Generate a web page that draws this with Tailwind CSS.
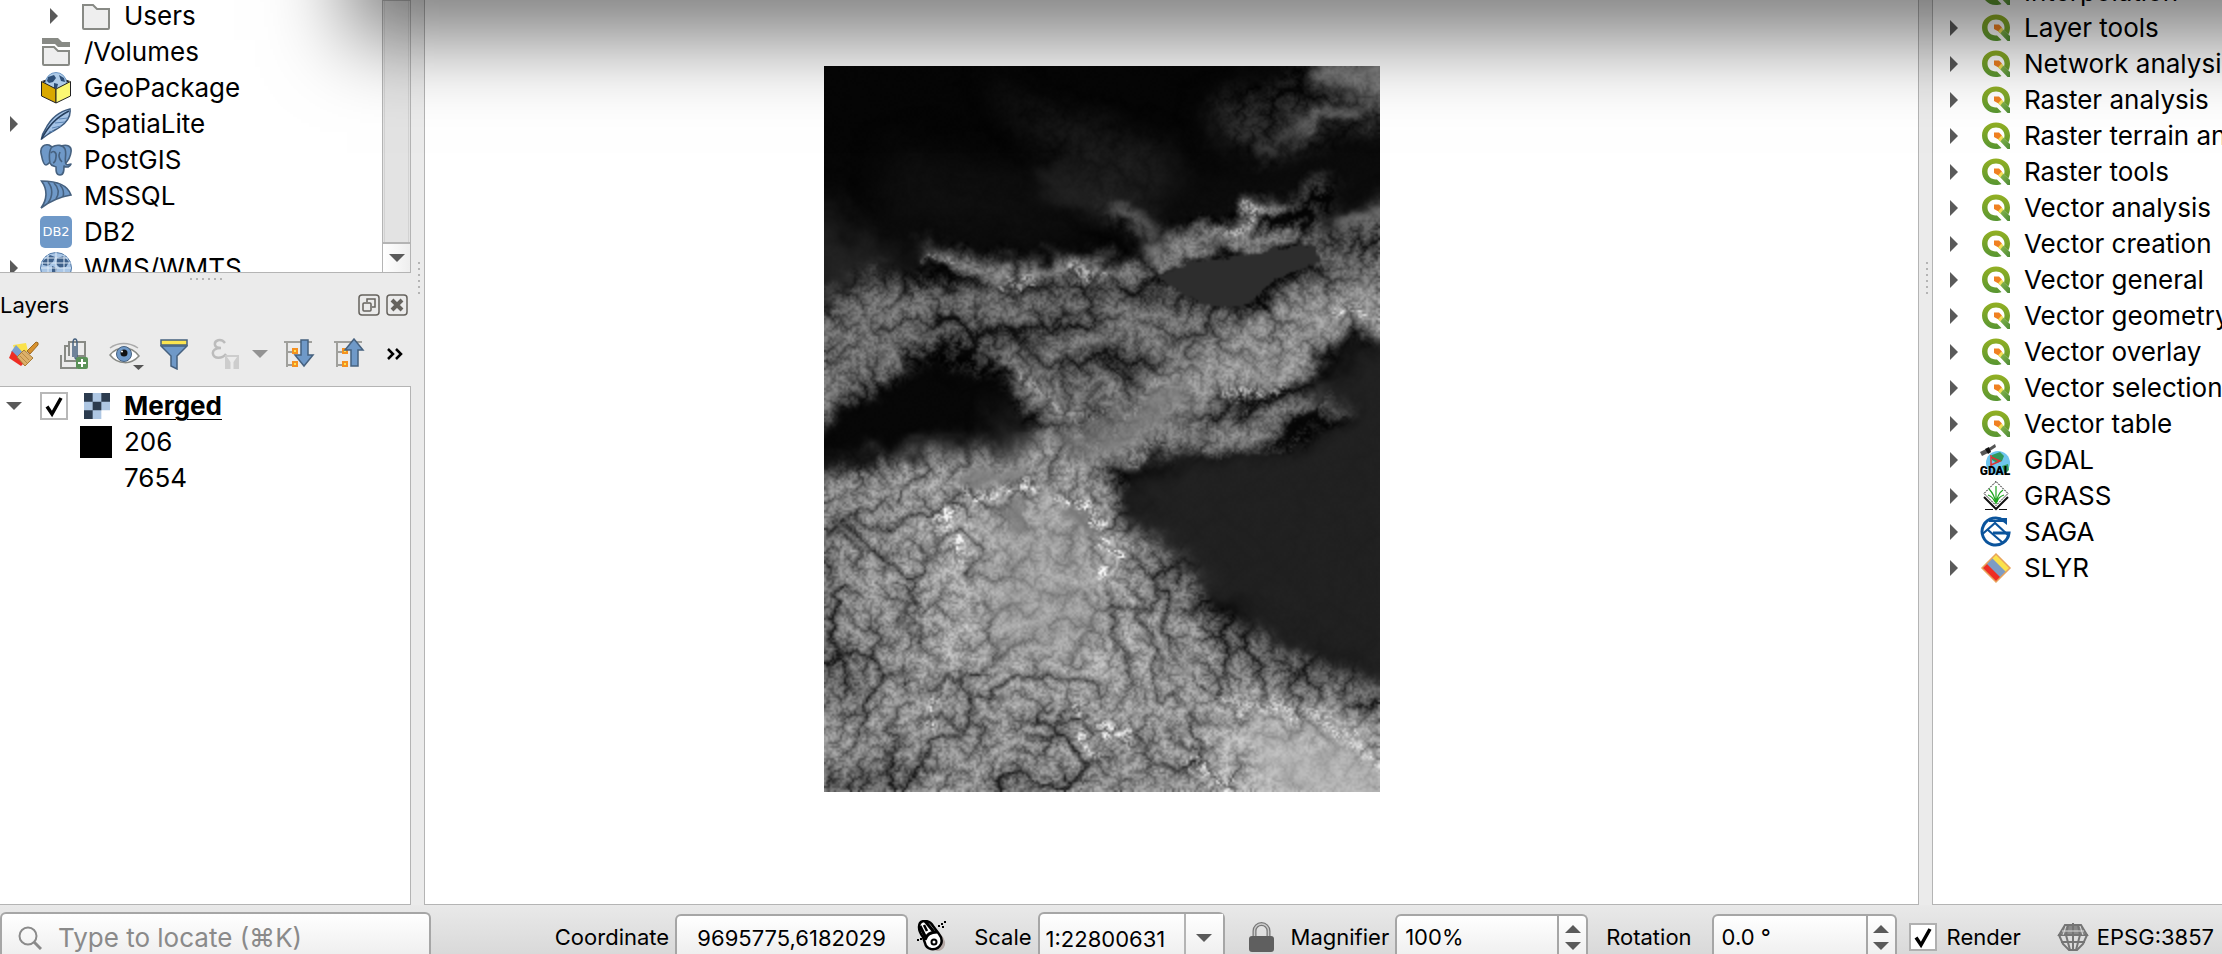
<!DOCTYPE html>
<html lang="en">
<head>
<meta charset="utf-8">
<meta name="viewport" content="width=device-width, initial-scale=1">
<title>QGIS</title>
<script src="https://cdn.jsdelivr.net/npm/@tailwindcss/browser@4"></script>
</head>
<body class="relative flex h-screen flex-col overflow-hidden bg-[#ebebeb] font-['Inter',sans-serif] text-black">

<!-- Shared icon symbols -->
<svg class="invisible absolute size-0" aria-hidden="true">
  <defs>
    <linearGradient id="gq" x1="0" y1="0" x2="0" y2="1"><stop offset="0" stop-color="#93b023"/><stop offset="1" stop-color="#589632"/></linearGradient>
    <linearGradient id="gt" x1="0" y1="0" x2="1" y2="1"><stop offset="0" stop-color="#c9cf4e"/><stop offset=".3" stop-color="#7fb04a"/><stop offset="1" stop-color="#4c8a34"/></linearGradient>
  </defs>
  <symbol id="right" viewBox="0 0 8 16"><path d="M0 0L8 8L0 16z" fill="#5a5a5a"/></symbol>
  <symbol id="down" viewBox="0 0 16 8"><path d="M0 0H16L8 8z" fill="#5a5a5a"/></symbol>
  <symbol id="up" viewBox="0 0 16 8"><path d="M0 8H16L8 0z" fill="#5a5a5a"/></symbol>
  <symbol id="q" viewBox="0 0 32 32">
    <path d="M16 2.500C8 2.500 2 8 2 15.500S8 29 16 29c2 0 4-.4 5.500-1l-4.500-4.600c-5.500.6-9.500-3-9.500-7.900 0-4.700 3.600-8 8.500-8s8.500 3.300 8.500 8c0 1-.2 2-.5 3l4.300 4C29.400 20.500 30 18 30 15.500 30 8 24 2.500 16 2.500z" fill="url(#gq)"/>
    <path d="M18 19L21 15.500L30 24V29H27.500z" fill="url(#gt)"/>
    <path d="M14 12.500h5l3 3L18.500 19.500L14 17z" fill="#f08021"/><path d="M18 19.500l3.500-4 2 2-3.200 4z" fill="#f4e05a"/>
  </symbol>
  <symbol id="folder" viewBox="0 0 32 32"><path d="M3 5h10l4 4h12v19q0 1-1 1H4q-1 0-1-1z" fill="#eee" stroke="#888a85" stroke-width="2"/></symbol>
  <symbol id="volumes" viewBox="0 0 32 32"><path d="M2 2h16l4 4h8v5H18l-3-3H2z" fill="#888a85"/><path d="M3 11h11l4 4h11v13q0 1-1 1H4q-1 0-1-1z" fill="#eee" stroke="#888a85" stroke-width="2"/></symbol>
  <symbol id="gpkg" viewBox="0 0 32 32">
    <path d="M2 9L16 4l14 5-14 8z" fill="#222"/>
    <circle cx="16" cy="11" r="10.500" fill="#aecbe8" stroke="#6d97c4"/>
    <path d="M8 5l6-2 2 3-3 4-4 1-2-2zM19 3l5 3 1 4-4-1zM14 11l4 1-1 4h-3z" fill="#2d4e77"/>
    <path d="M1.500 9.500L16 17v14L1.500 24z" fill="#d9a800" stroke="#222"/><path d="M30.500 9.500L16 17v14l14.500-7z" fill="#fcf872" stroke="#222"/>
  </symbol>
  <symbol id="feather" viewBox="0 0 32 32"><path d="M1.500 31c.5-4 2-7 4-10C10 12 17 4 30 1c1 7-3 13-10 18-4 3-8 4-13 8z" fill="#a4c3e6" stroke="#3e5b7e" stroke-width="1.500"/><path d="M1.500 31C8 19 15 10 29 3" fill="none" stroke="#253e5d" stroke-width="1.500"/><path d="M12 20l9-2M15 15l10-1M19 11l9-1M9 24l5-1" stroke="#5d86b5"/></symbol>
  <symbol id="elephant" viewBox="0 0 32 32"><g fill="#6f99c8" stroke="#46617f" stroke-width="1.600" stroke-linejoin="round"><path d="M9 1C4 0 0 3 1 9c1 5 2 12 5 12 2 0 3-2 5-4l4-12z"/><path d="M21 2c6-2 11 0 10 6-.5 5-4 10-6 12l-4-4z"/><path d="M12 3c5-3 11-2 13 2 2 5-1 11 1 15 1 2 3 0 5 0-1 3-4 4-7 2 0 4 0 9-4 9s-4-4-4-8c-2-1-5-1-6-4-1-5-1-13 2-16z"/><path d="M11 9c2-3 6-1 5 4-.6 3 0 5-3 6M20 8c-2 4-1 7 2 10" fill="none"/></g></symbol>
  <symbol id="sail" viewBox="0 0 32 32"><path d="M1.500 1C14 1 27 3 31 15 19 17 9 22 1 28 7 20 8 10 1.500 1z" fill="#6f99c8" stroke="#46617f" stroke-width="1.600"/><path d="M8 2c5 6 5 14 0 21M14 3c5 5 5 11 2 16M20 5c4 4 4 8 3 12" fill="none" stroke="#46617f" stroke-width="1.600"/></symbol>
  <symbol id="db2" viewBox="0 0 32 32"><rect width="32" height="32" rx="5" fill="#6f99c8"/><text x="16" y="19.500" text-anchor="middle" font-family="DejaVu Sans" font-size="13" fill="#fff">DB2</text></symbol>
  <symbol id="globe" viewBox="0 0 32 32"><circle cx="16" cy="16" r="15.500" fill="#a9c6e6" stroke="#527aa8"/><path d="M3 9l7-6 5 2-2 5-5 4-5-1zM17 6l7-2 5 6-3 5-6 1-4-4zM12 14l5 2-1 6h-4z" fill="#3e608a"/><path d="M1 11h30M4 6h24M1 16h30M16 0v32M8 3v26M24 3v26" stroke="#dce9f6" fill="none"/></symbol>
  <symbol id="gdal" viewBox="0 0 32 32"><circle cx="18" cy="19" r="12" fill="#6ec5ee"/><path d="M12 11l8-3 4 4-2 5-5 2-5-3zM22 22l6-2 1 6-4 4z" fill="#2f9a5c"/><path d="M11 11v13M11 13l9 4-9 4" stroke="#d33" fill="none" stroke-width="1.500"/><path d="M0 8l6-3 2 4-6 3zM9 4l6-4 1 3-6 4z" fill="#555"/><path d="M5 5l4-2 2 5-3 2z" fill="#111"/><text x="15" y="31" text-anchor="middle" font-family="Roboto" font-weight="900" font-size="12" fill="#000">GDAL</text></symbol>
  <symbol id="grass" viewBox="0 0 32 32"><path d="M16 1.500L28 13.500 16 25.500 4 13.500z" fill="#fff" stroke="#111" stroke-dasharray="2 1"/><path d="M4 17l12 12 12-12" fill="none" stroke="#111" stroke-width="2"/><path d="M5 29.500h8M19 29.500h8" stroke="#111"/><path d="M16 24C15 17 12 12 9 9M16 24c0-8 0-14 0-18M16 24c1-7 4-12 7-14M15 22c-2-4-4-6-7-7M17 22c1-4 4-6 7-7" stroke="#1ea51e" stroke-width="1.200" fill="none"/></symbol>
  <symbol id="saga" viewBox="0 0 32 32"><path d="M24 5A13.500 13.500 0 1 0 29 17H13" fill="none" stroke="#0b549c" stroke-width="3"/><path d="M2.500 18L15 7l13 12M8 14l15 13M9 5h16" fill="none" stroke="#0b549c" stroke-width="2.200"/><path d="M18 2h9v7z" fill="#0b549c"/></symbol>
  <symbol id="slyr" viewBox="0 0 32 32"><path d="M16 2L30 16 16 30 2 16z" fill="#7d9cc4"/><path d="M16 2L30 16l-4 4L12 6z" fill="#fbe24b"/><path d="M2 16l4.500-4.500 14 14L16 30z" fill="#ee2d24"/><path d="M16 2L30 16 16 30 2 16z" fill="none" stroke="#e8a35c" stroke-width="1.500"/></symbol>
  <symbol id="check" viewBox="0 0 28 28"><path d="M7 14.500l5 7.500L21 6" fill="none" stroke="#000" stroke-width="3.500"/></symbol>
</svg>

<div class="flex min-h-0 flex-1">

  <!-- Left docks: browser and layers -->
  <aside class="flex w-[411px] shrink-0 flex-col">
    <section aria-label="Browser" class="flex h-[273px] border-r border-b border-[#b4b4b4] bg-white">
      <ul class="-mt-[2px] min-w-0 flex-1 overflow-hidden text-[26px] leading-9">
        <li class="flex h-9 items-center pl-[50px]"><button aria-label="Expand Users" class="w-[30px]"><svg class="h-4 w-2"><use href="#right"/></svg></button><svg class="mr-3 size-8"><use href="#folder"/></svg>Users</li>
        <li class="flex h-9 items-center pl-10"><svg class="mr-3 size-8"><use href="#volumes"/></svg>/Volumes</li>
        <li class="flex h-9 items-center pl-10"><svg class="mr-3 size-8"><use href="#gpkg"/></svg>GeoPackage</li>
        <li class="flex h-9 items-center pl-[10px]"><button aria-label="Expand SpatiaLite" class="w-[30px]"><svg class="h-4 w-2"><use href="#right"/></svg></button><svg class="mr-3 size-8"><use href="#feather"/></svg>SpatiaLite</li>
        <li class="flex h-9 items-center pl-10"><svg class="mr-3 size-8"><use href="#elephant"/></svg>PostGIS</li>
        <li class="flex h-9 items-center pl-10"><svg class="mr-3 size-8"><use href="#sail"/></svg>MSSQL</li>
        <li class="flex h-9 items-center pl-10"><svg class="mr-3 size-8"><use href="#db2"/></svg>DB2</li>
        <li class="flex h-9 items-center pl-[10px]"><button aria-label="Expand WMS/WMTS" class="w-[30px]"><svg class="h-4 w-2"><use href="#right"/></svg></button><svg class="mr-3 size-8"><use href="#globe"/></svg>WMS/WMTS</li>
      </ul>
      <div class="flex w-7 flex-col border-l border-[#b4b4b4]">
        <div class="flex-1 border-t border-b-2 border-[#b4b4b4] bg-[#e3e3e3]"><div class="mx-px h-full border-x border-[#d2d2d2]"></div></div>
        <button aria-label="Scroll down" class="flex h-7 items-center justify-center bg-linear-to-r from-white to-[#eee]"><svg class="h-2 w-4"><use href="#down"/></svg></button>
      </div>
    </section>
    <div class="flex h-3 items-center justify-center gap-1">
      <i class="size-[2px] bg-[#b4b4b4]"></i><i class="size-[2px] bg-[#b4b4b4]"></i><i class="size-[2px] bg-[#b4b4b4]"></i><i class="size-[2px] bg-[#b4b4b4]"></i><i class="size-[2px] bg-[#b4b4b4]"></i><i class="size-[2px] bg-[#b4b4b4]"></i>
    </div>
    <header class="flex h-10 items-center gap-[6px] pr-[3px]">
      <h2 class="flex-1 text-[22px]">Layers</h2>
      <button aria-label="Float"><svg class="size-[22px]" viewBox="0 0 22 22" fill="none" stroke="#66635e" stroke-width="1.500"><rect x="1" y="1" width="20" height="20" rx="3"/><rect x="5" y="9" width="8" height="8" rx="1"/><path d="M9 8V5h8v8h-3"/></svg></button>
      <button aria-label="Close"><svg class="size-[22px]" viewBox="0 0 22 22" fill="none" stroke="#66635e"><rect x="1" y="1" width="20" height="20" rx="3" stroke-width="1.500"/><path d="M6 6l10 10M16 6L6 16" stroke-width="4"/></svg></button>
    </header>
    <div role="toolbar" aria-label="Layers toolbar" class="flex h-[61px] items-center pb-[3px] pl-2 [&_button]:flex [&_button]:shrink-0">
      <button aria-label="Layer styling" class="w-[51px]"><svg class="size-8" viewBox="0 0 32 32"><path d="M5 7l13-2 2 8-12 5z" fill="#fbe24b"/><path d="M3 14l5-7 10 11-4 6z" fill="#7aa0d0"/><path d="M1 20l3-7 12 12-3 3z" fill="#ee2d24"/><path d="M9 19l7-7 9 8-8 8z" fill="#dcb06a" stroke="#a87b35"/><path d="M12 18l7 7M14 15l7 7" stroke="#a87b35" stroke-width=".7"/><path d="M19 13l9-9q3 0 2 3l-8 9z" fill="#d8922f" stroke="#9c6a25"/></svg></button>
      <button aria-label="Add group" class="w-[50px]"><svg class="size-8" viewBox="0 0 32 32" fill="none"><path d="M2 17v13h16" stroke="#888a85" stroke-width="2"/><path d="M9 8H6v15h15v-5" stroke="#888a85" stroke-width="2"/><path d="M10 18V4h16v14H18" stroke="#888a85" stroke-width="2"/><path d="M14 19V5q0-4 2-4t2 4v13q0 3-1 3t-1-3V8" stroke="#46617f" stroke-width="1.500"/><rect x="17" y="19" width="12" height="12" rx="2" fill="#5a9158"/><path d="M23 21v8M19 25h8" stroke="#fff" stroke-width="2"/></svg></button>
      <button aria-label="Manage map themes" class="w-[51px]"><svg class="h-8 w-9" viewBox="0 0 36 32" fill="none"><path d="M1 17C8 8 22 7 30 18 22 27 9 27 1 17z" fill="#fff" stroke="#888a85" stroke-width="1.500"/><path d="M1 10C9 4 20 4 29 10" stroke="#aaa" stroke-width="1.500"/><circle cx="15" cy="16" r="7.500" fill="#6f99c8" stroke="#46617f"/><circle cx="15" cy="15" r="3.500" fill="#111"/><circle cx="13" cy="13.500" r="1" fill="#fff"/><path d="M24 27h11l-5.500 5z" fill="#555"/></svg></button>
      <button aria-label="Filter legend" class="w-[51px]"><svg class="h-8 w-7" viewBox="0 0 28 32"><path d="M1 8h26L17 18v13l-6-3V18z" fill="#6f99c8" stroke="#46617f" stroke-width="1.500"/><path d="M1 2h26v5H1z" fill="#fbe44f" stroke="#46617f" stroke-width="1.500"/></svg></button>
      <button aria-label="Filter by expression" class="w-[72px] items-center justify-between pr-[15px]"><svg class="h-8 w-7" viewBox="0 0 28 32"><path d="M14 5C10 0 3 2 4 7c.5 3 4 3 6 3-5 0-9 2-8 6 1 5 9 5 13 0" fill="none" stroke="#bcbcbc" stroke-width="2.500"/><path d="M14 17h14v14H14z" fill="#cdcdcd"/><path d="M16 19h10l-3.500 5v7h-3v-7z" fill="#ebebeb"/></svg><svg class="h-2 w-4 opacity-60"><use href="#down"/></svg></button>
      <button aria-label="Expand all" class="w-[50px]"><svg class="size-8" viewBox="0 0 32 32"><path d="M1 4h28M4 4v25M4 14h6M4 27h6" stroke="#a0a09c" stroke-width="2" fill="none"/><path d="M10 11h4v4h-4zM10 24h4v4h-4z" fill="#fbe44f" stroke="#f59120" stroke-width="2"/><path d="M18 2h7v15h5l-9 11-9-11h6z" fill="#6f99c8" stroke="#46617f" stroke-width="1.500"/></svg></button>
      <button aria-label="Collapse all" class="w-[50px]"><svg class="size-8" viewBox="0 0 32 32"><path d="M1 4h28M4 4v25M4 14h6M4 27h6" stroke="#a0a09c" stroke-width="2" fill="none"/><path d="M10 11h4v4h-4zM10 24h4v4h-4z" fill="#fbe44f" stroke="#f59120" stroke-width="2"/><path d="M18 28h7V12h5L21 1 12 12h6z" fill="#6f99c8" stroke="#46617f" stroke-width="1.500"/></svg></button>
      <button aria-label="More tools" class="pl-1"><svg class="h-3 w-4" viewBox="0 0 16 12" fill="none" stroke="#000" stroke-width="2.500"><path d="M1 1l5 5-5 5M9 1l5 5-5 5"/></svg></button>
    </div>
    <ul class="flex-1 border-t border-r border-b border-[#b4b4b4] bg-white pt-px text-[26px] leading-9">
      <li class="flex h-9 items-center pl-[6px]"><button aria-label="Collapse Merged" class="w-[34px]"><svg class="h-2 w-4"><use href="#down"/></svg></button>
        <label class="flex items-center"><span class="relative mr-4 size-7"><input type="checkbox" checked class="block size-7 appearance-none border-2 border-[#b8b8b8] bg-white"><svg class="pointer-events-none absolute inset-0 size-7"><use href="#check"/></svg></span>
        <svg class="mr-[14px] size-[26px]" viewBox="0 0 3 3"><path d="M0 0h3v2H2v1H0z" fill="#aec7e3"/><path d="M0 0h1v1H0zM2 0h1v1H2zM1 1h1v1H1zM0 2h1v1H0z" fill="#2c3c4f"/></svg><span class="font-bold underline decoration-1 underline-offset-4">Merged</span></label></li>
      <li class="flex h-9 items-center pl-20"><span class="mr-3 size-8 bg-black"></span>206</li>
      <li class="flex h-9 items-center pl-20"><span class="mr-3 size-8 bg-white"></span>7654</li>
    </ul>
  </aside>

  <div class="flex w-[13px] shrink-0 flex-col items-end gap-1 pt-[262px] pr-1">
    <i class="size-[2px] bg-[#b4b4b4]"></i><i class="size-[2px] bg-[#b4b4b4]"></i><i class="size-[2px] bg-[#b4b4b4]"></i><i class="size-[2px] bg-[#b4b4b4]"></i><i class="size-[2px] bg-[#b4b4b4]"></i><i class="size-[2px] bg-[#b4b4b4]"></i>
  </div>

  <!-- Map canvas with the elevation raster -->
  <main class="min-w-0 flex-1 border-x border-b border-[#b4b4b4] bg-white pt-[66px] pl-[399px]">
    <canvas id="dem" width="278" height="363" class="h-[726px] w-[556px] bg-[#333]" role="img" aria-label="Merged elevation raster"></canvas>
  </main>

  <div class="flex w-[13px] shrink-0 flex-col items-end gap-1 pt-[262px] pr-1">
    <i class="size-[2px] bg-[#b4b4b4]"></i><i class="size-[2px] bg-[#b4b4b4]"></i><i class="size-[2px] bg-[#b4b4b4]"></i><i class="size-[2px] bg-[#b4b4b4]"></i><i class="size-[2px] bg-[#b4b4b4]"></i><i class="size-[2px] bg-[#b4b4b4]"></i>
  </div>

  <!-- Processing toolbox -->
  <aside class="w-[290px] shrink-0 overflow-hidden border-b border-l border-[#b4b4b4] bg-white">
    <ul class="-mt-[26px] text-[26px] leading-9 whitespace-nowrap [&>li]:flex [&>li]:h-9 [&>li]:items-center [&>li]:pl-[17px] [&_button]:w-[30px] [&_button]:shrink-0 [&_button>svg]:h-4 [&_button>svg]:w-2 [&>li>svg]:mr-3 [&>li>svg]:size-8 [&>li>svg]:shrink-0">
      <li><button aria-label="Expand"><svg><use href="#right"/></svg></button><svg><use href="#q"/></svg>Interpolation</li>
      <li><button aria-label="Expand"><svg><use href="#right"/></svg></button><svg><use href="#q"/></svg>Layer tools</li>
      <li><button aria-label="Expand"><svg><use href="#right"/></svg></button><svg><use href="#q"/></svg>Network analysis</li>
      <li><button aria-label="Expand"><svg><use href="#right"/></svg></button><svg><use href="#q"/></svg>Raster analysis</li>
      <li><button aria-label="Expand"><svg><use href="#right"/></svg></button><svg><use href="#q"/></svg>Raster terrain analysis</li>
      <li><button aria-label="Expand"><svg><use href="#right"/></svg></button><svg><use href="#q"/></svg>Raster tools</li>
      <li><button aria-label="Expand"><svg><use href="#right"/></svg></button><svg><use href="#q"/></svg>Vector analysis</li>
      <li><button aria-label="Expand"><svg><use href="#right"/></svg></button><svg><use href="#q"/></svg>Vector creation</li>
      <li><button aria-label="Expand"><svg><use href="#right"/></svg></button><svg><use href="#q"/></svg>Vector general</li>
      <li><button aria-label="Expand"><svg><use href="#right"/></svg></button><svg><use href="#q"/></svg>Vector geometry</li>
      <li><button aria-label="Expand"><svg><use href="#right"/></svg></button><svg><use href="#q"/></svg>Vector overlay</li>
      <li><button aria-label="Expand"><svg><use href="#right"/></svg></button><svg><use href="#q"/></svg>Vector selection</li>
      <li><button aria-label="Expand"><svg><use href="#right"/></svg></button><svg><use href="#q"/></svg>Vector table</li>
      <li><button aria-label="Expand"><svg><use href="#right"/></svg></button><svg><use href="#gdal"/></svg>GDAL</li>
      <li><button aria-label="Expand"><svg><use href="#right"/></svg></button><svg><use href="#grass"/></svg>GRASS</li>
      <li><button aria-label="Expand"><svg><use href="#right"/></svg></button><svg><use href="#saga"/></svg>SAGA</li>
      <li><button aria-label="Expand"><svg><use href="#right"/></svg></button><svg><use href="#slyr"/></svg>SLYR</li>
    </ul>
  </aside>
</div>

<!-- Status bar -->
<footer class="flex h-[49px] shrink-0 items-start overflow-hidden bg-linear-to-b from-[#e9e9e9] to-[#d9d9d9] pt-[7px] text-[22px] leading-[50px] whitespace-nowrap">
  <label class="flex h-[50px] w-[431px] shrink-0 items-center rounded-t-md border-x-2 border-t-2 border-[#a6a6a6] bg-linear-to-b from-white to-[#ececec] pl-4">
    <svg class="mr-4 size-6 shrink-0" viewBox="0 0 24 24" fill="none" stroke="#8a8a8a"><circle cx="10" cy="10" r="8.500" stroke-width="2"/><path d="M16 16l7 7" stroke-width="3"/></svg>
    <input type="text" aria-label="Locator" placeholder="Type to locate (⌘K)" class="w-full bg-transparent text-[26px] outline-none placeholder:text-[#8a8a8a]">
  </label>
  <div class="min-w-0 flex-1"></div>
  <label for="coord" class="mr-1.5">Coordinate</label>
  <input id="coord" type="text" value="9695775,6182029" class="mt-[2px] h-[46px] w-[233px] shrink-0 rounded-t-md border-x-2 border-t-2 border-[#a6a6a6] bg-linear-to-b from-white to-[#ececec] text-center outline-none">
  <button aria-label="Toggle extents" class="mt-2 ml-2 w-[58px] shrink-0"><svg class="h-8 w-8" viewBox="0 0 32 32"><path d="M14 4l8 8q8 6 7 13-2 6-8 6l-6-3z" fill="#b5a9a6"/><path d="M3 7Q3 1 9 1q5 0 8 5l6 8q4 5 2 10-3 6-10 5-5-1-6-6l-2-6Q3 12 3 7z" fill="#fff" stroke="#000" stroke-width="2.500"/><path d="M4 6l6 12M9 1l9 11M9 20q2-8 12-8" fill="none" stroke="#000" stroke-width="3"/><path d="M8 5l3 6" stroke="#000" stroke-width="2.500"/><circle cx="18" cy="22" r="2.500" fill="none" stroke="#000" stroke-width="2"/><path d="M22 6h2M25 4h2M28 2h2M1 20h2M4 19h2M26 7h2" stroke="#000" stroke-width="2"/></svg></button>
  <label for="scale" class="mr-1.5">Scale</label>
  <div class="relative w-[187px] shrink-0">
    <select id="scale" class="h-[50px] w-full appearance-none rounded-t-md border-x-2 border-t-2 border-[#a6a6a6] bg-linear-to-b from-white to-[#ececec] pl-[6px] outline-none"><option>1:22800631</option></select>
    <span class="pointer-events-none absolute top-[2px] right-[2px] flex h-12 w-[39px] items-center justify-center border-l-2 border-[#b4b4b4] bg-linear-to-b from-white to-[#ececec]"><svg class="h-2 w-4"><use href="#down"/></svg></span>
  </div>
  <button aria-label="Lock scale" class="mt-[10px] ml-6 w-[42px] shrink-0"><svg class="h-[30px] w-[25px]" viewBox="0 0 25 30"><path d="M5.500 15V9a7 7 0 0 1 14 0v6" fill="none" stroke="#777" stroke-width="4"/><path d="M5.500 15V9a7 7 0 0 1 14 0v6" fill="none" stroke="#ccc" stroke-width="1.500"/><rect y="14" width="25" height="16" rx="3" fill="#5f5f5f"/></svg></button>
  <label for="mag" class="mr-1.5">Magnifier</label>
  <div class="mt-[2px] flex h-[50px] w-[193px] shrink-0 rounded-t-md border-x-2 border-t-2 border-[#a6a6a6] bg-linear-to-b from-white to-[#ececec]">
    <input id="mag" type="text" value="100%" class="h-[42px] min-w-0 flex-1 bg-transparent pl-2 outline-none">
    <span class="flex w-[29px] flex-col items-center gap-[9px] border-l-2 border-[#a6a6a6] pt-[9px]"><button aria-label="Increase magnifier" class="flex"><svg class="h-2 w-4"><use href="#up"/></svg></button><button aria-label="Decrease magnifier" class="flex"><svg class="h-2 w-4"><use href="#down"/></svg></button></span>
  </div>
  <label for="rot" class="mr-5 ml-[18px]">Rotation</label>
  <div class="mt-[2px] flex h-[50px] w-[185px] shrink-0 rounded-t-md border-x-2 border-t-2 border-[#a6a6a6] bg-linear-to-b from-white to-[#ececec]">
    <input id="rot" type="text" value="0.0 °" class="h-[42px] min-w-0 flex-1 bg-transparent pl-2 outline-none">
    <span class="flex w-[29px] flex-col items-center gap-[9px] border-l-2 border-[#a6a6a6] pt-[9px]"><button aria-label="Increase rotation" class="flex"><svg class="h-2 w-4"><use href="#up"/></svg></button><button aria-label="Decrease rotation" class="flex"><svg class="h-2 w-4"><use href="#down"/></svg></button></span>
  </div>
  <label class="ml-3 flex h-[50px] items-center"><span class="relative mr-[10px] size-7"><input type="checkbox" checked class="block size-7 appearance-none border-2 border-[#b0b0b0] bg-white"><svg class="pointer-events-none absolute inset-0 size-7"><use href="#check"/></svg></span>Render</label>
  <button class="mr-2 ml-9 flex h-[50px] shrink-0 items-center gap-2"><svg class="size-8" viewBox="0 0 32 32" fill="none" stroke="#757575" stroke-width="2"><path d="M8 4h16l6 10H2z" fill="#8a8a8a"/><path d="M2 14l4 9 6 6h8l6-6 4-9"/><path d="M11 4l-2 10 4 15M21 4l2 10-4 15M1 14h30M4 21h24M16 2v27"/><path d="M9 5l-3 9M23 5l3 9M5 10h22" stroke="#d9d9d9" stroke-width="1"/></svg>EPSG:3857</button>
</footer>

<!-- Shadow cast by the window above -->
<div class="pointer-events-none absolute -top-[400px] -right-[200px] left-[347px] h-[400px] shadow-[0_40px_76px_rgba(0,0,0,0.5)]"></div>

<script>
// Elevation raster: painted regions give the mean height, then drainage is
// routed over a noisy surface so that valleys branch as rivers do.
(() => {
  const W = 278, H = 363, N = W * H, S = W / 1543;
  const layer = (bg, items) => {
    const c = document.createElement('canvas'); c.width = W; c.height = H;
    const g = c.getContext('2d', { willReadFrequently: true });
    g.fillStyle = bg; g.fillRect(0, 0, W, H);
    g.setTransform(S, 0, 0, S, -11 * S, -18 * S);
    g.lineJoin = g.lineCap = 'round';
    for (const [v, blur, d, stroke] of items) {
      g.filter = blur ? `blur(${blur * S}px)` : 'none';
      const col = `rgb(${v},${v},${v})`, p = new Path2D(d);
      if (stroke) { g.strokeStyle = col; g.lineWidth = stroke; g.stroke(p); }
      else { g.fillStyle = col; g.fill(p); }
    }
    const px = g.getImageData(0, 0, W, H).data, out = new Float32Array(N);
    for (let i = 0; i < N; i++) out[i] = px[i * 4];
    return out;
  };

  let seed = 12345;
  const rnd = () => (seed = (seed * 1664525 + 1013904223) >>> 0) / 4294967296;
  const field = cell => {
    const gw = Math.ceil(W / cell) + 2, gh = Math.ceil(H / cell) + 2, v = Float32Array.from({ length: gw * gh }, rnd);
    const out = new Float32Array(N);
    for (let y = 0; y < H; y++) for (let x = 0; x < W; x++) {
      const fx = x / cell, fy = y / cell, a = fx | 0, b = fy | 0, s = t => t * t * (3 - 2 * t), u = s(fx - a), w = s(fy - b), k = b * gw + a;
      out[y * W + x] = (v[k] * (1 - u) + v[k + 1] * u) * (1 - w) + (v[k + gw] * (1 - u) + v[k + gw + 1] * u) * w - .5;
    }
    return out;
  };
  const n1 = field(18), n2 = field(8), n3 = field(4), n4 = field(2), n5 = field(1);
  const wx = field(11), wy = field(11), vx = field(4), vy = field(4);
  // Bends a layer's outlines by smooth noise.
  const warp = (src, big, small) => {
    const out = new Float32Array(N);
    for (let y = 0; y < H; y++) for (let x = 0; x < W; x++) {
      const i = y * W + x;
      const X = Math.max(0, Math.min(W - 1, Math.round(x + wx[i] * big + vx[i] * small)));
      const Y = Math.max(0, Math.min(H - 1, Math.round(y + wy[i] * big + vy[i] * small)));
      out[i] = src[Y * W + X];
    }
    return out;
  };

  const TARIM = 'M1640 790L1500 800 1390 900 1330 960 1500 960 1400 1040 1300 1075 1180 1100 1000 1105 960 1150 850 1170 870 1250 950 1320 1040 1390 1080 1480 1200 1545 1400 1640 1640 1740z';
  const LAKE = 'M930 605L1000 575 1100 555 1200 535 1320 522 1380 525 1390 560 1280 605 1200 665 1170 685 1080 685 1010 655z';
  const FERGANA = 'M-40 1080L100 970 200 900 300 830 370 870 470 900 510 960 490 1020 420 1070 250 1080 100 1090 -40 1150z';

  const base = warp(layer('#050505', [
    [14, 50, 'M200 250L640 330 740 520 150 480z'],
    [26, 40, 'M440 30L640 160 960 240 1040 340 900 480 740 380 640 240z'],
    [38, 45, 'M1080 140L1350 60 1600 20V180L1260 260 1090 220z'],
    [34, 40, 'M-40 380L160 530 300 560 280 640 -40 700z'],
    [12, 40, 'M950 350L1340 290 1600 230V330L1400 420 1000 440z'],
    [74, 35, 'M1330 470L1600 400V640L1400 640z'],
    [112, 18, 'M1370 0H1600V125L1410 95 1350 60z'],
    [110, 12, 'M1320 205L1360 150 1500 145', 22], [70, 16, 'M1320 205L1230 260', 26],
    [40, 30, 'M640 330L860 440', 60], [98, 14, 'M815 415L930 490', 26],
    [108, 16, 'M880 510L1000 480 1130 440 1200 395 1310 390 1280 430 1180 470 1370 490 1380 525 1150 535 920 600z'],
    [62, 14, 'M1310 395L1410 340', 20], [110, 16, 'M1460 455L1600 400', 34],
    [112, 18, 'M250 500L400 530 560 550 740 560 920 570 910 620 520 630 380 580z'],
    [102, 26, 'M-40 720L120 610 300 640 480 630 900 640 1180 700 1420 570 1600 550V780L1450 770 1290 920 1100 960 960 1110 560 1140 600 1000 500 850 420 790 330 760 180 900 -40 1050z'],
    [136, 26, 'M1180 730L1400 640 1600 650V750L1450 735 1300 880 1130 950 960 970 900 900z'],
    [122, 26, 'M700 1090L800 1000 1020 890 1060 1000 900 1090 780 1150z'],
    [108, 20, 'M960 1100L1060 990 1240 970 1430 890 1490 970 1340 1000 1230 1090z'],
    [58, 22, 'M580 720L760 690 820 700 700 760 580 770z'], [66, 18, 'M640 830L840 790 980 860 740 900z'], [48, 16, 'M330 710L440 760 560 760', 50],
    [64, 14, 'M600 660h90M840 660h70', 30],
    [6, 28, FERGANA], [40, 34, 'M500 920L560 1000 540 1080 470 1090z'],
    [130, 30, 'M-40 1150L200 1100 300 1080 470 1090 600 1040 800 1100 780 1180 870 1260 950 1350 1040 1440 1070 1560 1240 1660 1400 1720 1600 1800V2100H-40z'],
    [152, 45, 'M260 1250L700 1200 800 1300 860 1500 1000 1800 600 1750 300 1700z'],
    [174, 50, 'M1050 1840L1350 1800 1620 1930V2100H1160z'],
    [84, 30, 'M-30 1200L40 1240 50 1480 70 1700 20 1780 -30 1800z'],
    [76, 35, 'M30 1630L120 1650 140 1830 50 1760z'],
    [84, 35, 'M-20 1980L280 1920 260 2080H-20zM430 2000L690 1990 690 2080H430z'],
    [32, 24, TARIM], [86, 35, 'M900 1300L1060 1440 1080 1540 960 1500 890 1400z'],
    [84, 34, 'M1100 1560L1240 1590 1420 1690 1600 1740V1860L1380 1760 1120 1700z'],
    [130, 10, 'M400 1165L500 1145 560 1135', 22], [128, 10, 'M540 1235V1290', 44], [120, 10, 'M680 1250L790 1320', 18],
    [112, 6, 'M810 1480L835 1560 850 1650', 16],
    [98, 6, 'M790 745L830 720 870 750 830 775z']
  ]), 8, 4);
  const lake = warp(layer('#000', [[255, 2, LAKE]]), 3, 2);

  const relief = warp(layer('#060606', [
    [26, 40, 'M440 30L960 240 900 480 640 300z'],
    [90, 30, 'M1080 140L1350 0H1600V180L1200 270z'],
    [110, 20, 'M740 370L830 420 960 500 860 500z'],
    [200, 20, 'M-40 720L110 600 420 600 250 500 340 510 600 550 900 560 1000 470 1180 400 1310 380 1420 330 1400 500 1600 400V790L1450 790 1320 920 1500 950 1380 1050 1150 1100 950 1110 780 1150 560 1140 590 1010 480 880 330 830 180 930 -40 1060z'],
    [250, 24, 'M-40 1120L250 1090 800 1100 860 1260 950 1340 1060 1420 1100 1540 1250 1620 1400 1690 1600 1760V2100H-40z'],
    [140, 45, 'M440 1250L740 1230 800 1620 480 1680z'],
    [80, 50, 'M1150 1850L1400 1850 1620 1960V2100H1250z'],
    [60, 20, 'M640 1060L1000 890 1050 960 760 1110z'],
    [6, 22, FERGANA], [6, 18, TARIM],
    [20, 10, 'M400 1165L560 1135M540 1230V1290M680 1250L790 1320', 30]
  ]), 8, 4);

  const trunk = warp(layer('#000', [
    [150, 4, 'M30 1270L140 1240 250 1200 300 1170 M60 1330L180 1290 260 1260 350 1240 370 1260 440 1280M230 1430L330 1340 440 1350 430 1400 390 1420 480 1440 560 1420', 10],
    [120, 4, 'M980 1490L970 1600 1010 1720 1130 1800M930 1640L950 1760 1040 1850 1060 1960 1150 2030M850 1500L920 1600 970 1720', 10],
    [80, 4, 'M270 1560L430 1540 560 1500M260 1600L300 1660M430 1690L450 1660 540 1610 660 1600M600 1690L760 1610 720 1480M1060 1830L1200 1810 1360 1860 1440 1910', 10],
    [220, 4, 'M30 1600L60 1450 110 1400 170 1370 230 1420 210 1480 260 1520 240 1620 250 1740 310 1750 390 1700 540 1705', 9],
    [180, 4, 'M20 1690L70 1640 150 1680 150 1850 20 1960M220 2030L290 1910 340 1850 400 1840 470 1750 540 1730 720 1740 780 1760 750 1830 680 1850M750 1960L840 1990 890 2050M850 1970L980 1960 1040 1980', 8],
    [255, 4, 'M470 2050L520 2000 600 2005 680 2025 730 1990 730 1940 640 1880 590 1850 610 1790', 14],
    [255, 5, 'M330 700L400 740 430 770 360 830 360 920M450 670L460 740 560 750 610 770 620 820', 14],
    [60, 4, 'M0 830L100 780 260 690M20 760L120 680M620 830L900 810 1180 830 1290 880M640 880L900 840M1190 690V730M1410 660L1415 730 1460 730M910 560L915 620', 8]
  ]), 13, 7);
  const snow = warp(layer('#000', [
    [90, 8, 'M400 1205H500M520 1180H590M670 1220L740 1240 800 1310M300 1840L330 1790M780 1840L850 1870M730 1880L770 1930M1030 1950L1120 2010M700 2070L740 2040M320 1280L350 1260 335 1310M370 1360L390 1380M700 1795L740 1830', 18],
    [160, 5, 'M800 1350L830 1375M800 1430V1455', 16],
    [60, 8, 'M310 545L380 560M520 610L580 600M690 600L780 600M1120 470L1220 420M1140 940L1290 915M1440 690L1540 710', 24],
    [34, 5, 'M560 860L680 990 760 1070M800 1020L900 940 1000 890M850 1110L960 1080M670 985L800 975', 12],
    [34, 5, 'M1030 1090L1200 1095 1290 1070 1350 1040M1340 1000L1440 930', 10],
    [45, 8, 'M1130 1800L1250 1790 1400 1830 1554 1960', 20]
  ]), 9, 6);
  for (let i = 0; i < N; i++) {
    const k = lake[i] / 255;
    base[i] = base[i] * (1 - k) + 45 * k;
    relief[i] *= 1 - k;
  }

  // Priority flood from the map edges gives each cell a downstream neighbour.
  const z = new Float32Array(N);
  for (let i = 0; i < N; i++) z[i] = base[i] * .35 + n1[i] * 26 + n2[i] * 20 + n3[i] * 14 + n4[i] * 9 + n5[i] * 9 - trunk[i] * .35;
  const to = new Int32Array(N).fill(-1), seen = new Uint8Array(N), order = [];
  const BINS = 4096, bins = Array.from({ length: BINS }, () => []);
  const bin = h => Math.max(0, Math.min(BINS - 1, Math.round((h + 200) * 8)));
  for (let i = 0; i < N; i++) {
    const x = i % W, y = (i / W) | 0;
    if (x === 0 || y === 0 || x === W - 1 || y === H - 1 || base[i] < 12) { seen[i] = 1; bins[bin(z[i])].push(i); }
  }
  for (let cur = 0; cur < BINS; cur++) {
    const q = bins[cur];
    for (let k = 0; k < q.length; k++) {
      const i = q[k], x = i % W, y = (i / W) | 0;
      order.push(i);
      for (let dy = -1; dy <= 1; dy++) for (let dx = -1; dx <= 1; dx++) {
        const X = x + dx, Y = y + dy, j = Y * W + X;
        if (X < 0 || Y < 0 || X >= W || Y >= H || seen[j]) continue;
        seen[j] = 1; to[j] = i; bins[Math.max(cur, bin(z[j]))].push(j);
      }
    }
  }
  const acc = new Float32Array(N).fill(1);
  for (let k = order.length - 1; k >= 0; k--) { const i = order[k]; if (to[i] >= 0) acc[to[i]] += acc[i]; }

  // Depth of each channel, relaxed sideways to widen large valleys.
  let v = new Float32Array(N);
  for (let i = 0; i < N; i++) v[i] = Math.min(8.5, Math.log2(acc[i]));
  for (let pass = 0; pass < 3; pass++) {
    const w = v.slice();
    for (let y = 1; y < H - 1; y++) for (let x = 1; x < W - 1; x++) {
      const i = y * W + x;
      w[i] = Math.max(v[i], (v[i - 1] + v[i + 1] + v[i - W] + v[i + W]) / 4, Math.max(v[i - 1], v[i + 1], v[i - W], v[i + W]) - 2.6);
    }
    v = w;
  }
  const ctx = document.getElementById('dem').getContext('2d'), img = ctx.createImageData(W, H);
  for (let i = 0; i < N; i++) {
    const r = relief[i] / 255;
    const g = base[i] + r * (28 - 9 * v[i] + n5[i] * 46 + n4[i] * 26 + n2[i] * 20) - trunk[i] * .12 * r + snow[i] * Math.max(0, .6 + n5[i] * 1.4 + n4[i]);
    const c = Math.max(base[i] * .25, Math.min(250, g));
    img.data.set([c, c, c, 255], i * 4);
  }
  ctx.putImageData(img, 0, 0);
})();
</script>
</body>
</html>
